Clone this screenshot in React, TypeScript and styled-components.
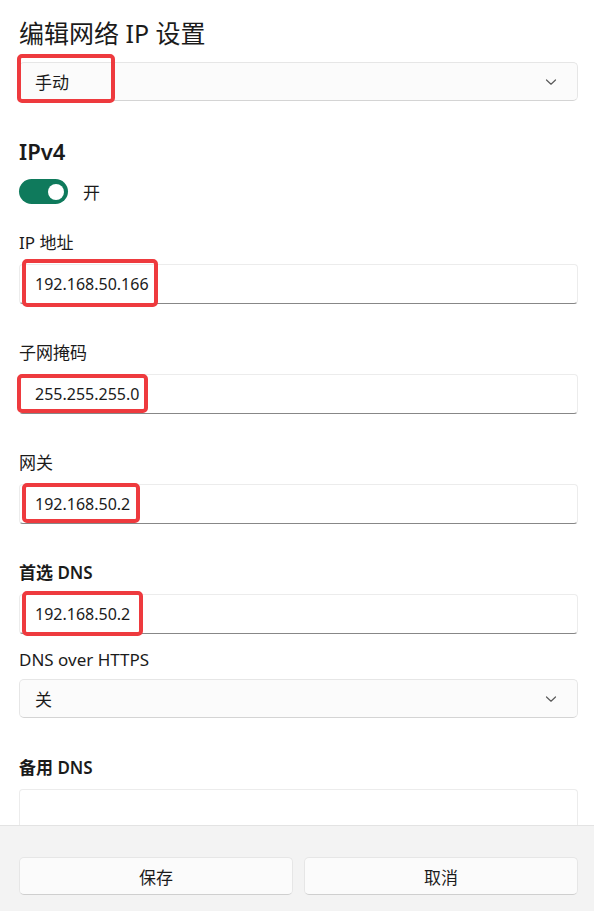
import styled, { createGlobalStyle } from "styled-components";

const GlobalStyle = createGlobalStyle`
  * {
    box-sizing: border-box;
  }
  body {
    margin: 0;
    background: #ffffff;
    color: #1b1b1b;
    font-family: "Noto Sans", "Noto Sans CJK SC", sans-serif;
  }
`;

const Page = styled.div`
  width: 594px;
  height: 911px;
  display: flex;
  flex-direction: column;
`;

const Content = styled.main`
  flex: 1;
  overflow: hidden;
  padding: 17px 16px 0 19px;
  display: flex;
  flex-direction: column;
`;

const Title = styled.h1`
  margin: 0;
  font-size: 25px;
  font-weight: 400;
  line-height: 32px;
`;

const Heading = styled.h2`
  margin: 0;
  font-size: 22px;
  font-weight: 600;
  line-height: 30px;
`;

const Field = styled.div<{ $top: number; $gap?: number }>`
  display: flex;
  flex-direction: column;
  gap: ${({ $gap }) => $gap ?? 10}px;
  margin-top: ${({ $top }) => $top}px;
`;

const Label = styled.label<{ $bold?: boolean }>`
  font-size: 17px;
  line-height: 22px;
  font-weight: ${({ $bold }) => ($bold ? 600 : 400)};
`;

const Control = styled.div`
  position: relative;
`;

const Select = styled.div`
  height: 39px;
  display: flex;
  align-items: center;
  justify-content: space-between;
  padding: 0 20px 0 15px;
  background: #fbfbfb;
  border: 1px solid #e6e6e6;
  border-bottom-color: #d4d4d4;
  border-radius: 5px;
  font-size: 17px;
`;

const Input = styled.div`
  height: 40px;
  display: flex;
  align-items: center;
  padding: 0 15px;
  background: #ffffff;
  border: 1px solid #ececec;
  border-bottom: 1px solid #878787;
  border-radius: 4px;
  font-size: 16px;
`;

const Mark = styled.span<{ $l: number; $t: number; $w: number; $h: number }>`
  position: absolute;
  left: ${({ $l }) => $l}px;
  top: ${({ $t }) => $t}px;
  width: ${({ $w }) => $w}px;
  height: ${({ $h }) => $h}px;
  border: 4px solid #ee3a3e;
  border-radius: 5px;
  pointer-events: none;
`;

const ToggleRow = styled.div`
  display: flex;
  align-items: center;
  gap: 15px;
  margin-top: 13px;
  font-size: 17px;
`;

const Toggle = styled.span`
  width: 49px;
  height: 25px;
  border-radius: 13px;
  background: #0f7a5c;
  display: flex;
  align-items: center;
  justify-content: flex-end;
  padding-right: 4px;
`;

const Knob = styled.span`
  width: 16px;
  height: 16px;
  border-radius: 50%;
  background: #ffffff;
`;

const Footer = styled.footer`
  height: 86px;
  flex-shrink: 0;
  background: #f3f3f3;
  border-top: 1px solid #e3e3e3;
  padding: 31px 16px 0 19px;
  display: grid;
  grid-template-columns: 1fr 1fr;
  gap: 11px;
  align-items: start;
`;

const Button = styled.button`
  height: 38px;
  background: #fbfbfb;
  border: 1px solid #e6e6e6;
  border-bottom-color: #cfcfcf;
  border-radius: 5px;
  font-family: inherit;
  font-size: 17px;
  color: #1b1b1b;
`;

function Chevron() {
  return (
    <svg width="12" height="8" viewBox="0 0 12 8">
      <path d="M1.5 2 L6 6.2 L10.5 2" fill="none" stroke="#5a5a5a" strokeWidth="1.2" strokeLinecap="round" strokeLinejoin="round" />
    </svg>
  );
}

export default function App() {
  return (
    <Page>
      <GlobalStyle />
      <Content>
        <Title>编辑网络 IP 设置</Title>
        <Control style={{ marginTop: 13 }}>
          <Select>
            <span>手动</span>
            <Chevron />
          </Select>
          <Mark $l={-2} $t={-8} $w={98} $h={49} />
        </Control>

        <Field $top={35} $gap={0}>
          <Heading>IPv4</Heading>
        </Field>
        <ToggleRow>
          <Toggle>
            <Knob />
          </Toggle>
          <span>开</span>
        </ToggleRow>

        <Field $top={28}>
          <Label>IP 地址</Label>
          <Control>
            <Input>192.168.50.166</Input>
            <Mark $l={3} $t={-5} $w={136} $h={48} />
          </Control>
        </Field>

        <Field $top={38}>
          <Label>子网掩码</Label>
          <Control>
            <Input>255.255.255.0</Input>
            <Mark $l={-2} $t={0} $w={131} $h={39} />
          </Control>
        </Field>

        <Field $top={38}>
          <Label>网关</Label>
          <Control>
            <Input>192.168.50.2</Input>
            <Mark $l={3} $t={-1} $w={118} $h={40} />
          </Control>
        </Field>

        <Field $top={38}>
          <Label $bold>首选 DNS</Label>
          <Control>
            <Input>192.168.50.2</Input>
            <Mark $l={3} $t={-3} $w={121} $h={45} />
          </Control>
        </Field>

        <Field $top={15} $gap={8}>
          <Label>DNS over HTTPS</Label>
          <Select>
            <span>关</span>
            <Chevron />
          </Select>
        </Field>

        <Field $top={39}>
          <Label $bold>备用 DNS</Label>
          <Input />
        </Field>
      </Content>
      <Footer>
        <Button>保存</Button>
        <Button>取消</Button>
      </Footer>
    </Page>
  );
}
